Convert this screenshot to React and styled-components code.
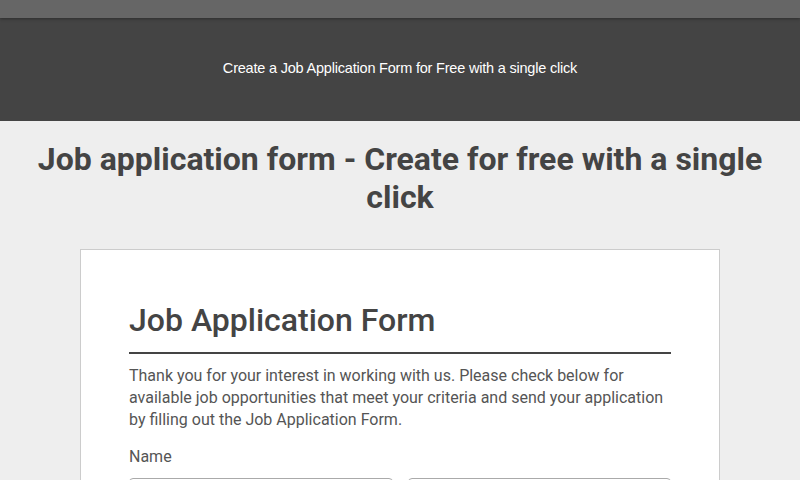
import React from "react";
import styled, { createGlobalStyle } from "styled-components";

const Global = createGlobalStyle`
  html, body { margin: 0; padding: 0; background: #eeeeee; }
  body { font-family: Roboto, "Liberation Sans", sans-serif; }
  * { box-sizing: border-box; }
`;

const TopBar = styled.div`
  height: 18px;
  background: #666666;
  box-shadow: 0 1px 3px rgba(0,0,0,0.35);
  position: relative;
  z-index: 1;
`;

const Banner = styled.header`
  height: 103px;
  background: #444444;
  display: flex;
  align-items: center;
  justify-content: center;
  padding-bottom: 4px;
`;

const BannerText = styled.span`
  font-family: "Liberation Sans", Arial, sans-serif;
  font-size: 14.5px;
  color: #ffffff;
  letter-spacing: -0.2px;
`;

const Main = styled.main`
  display: flex;
  flex-direction: column;
  align-items: center;
  padding: 19px 20px 0;
`;

const PageTitle = styled.h1`
  margin: 0 0 33px;
  font-size: 32px;
  line-height: 38px;
  font-weight: 700;
  color: #444444;
  text-align: center;
  max-width: 760px;
`;

const Card = styled.section`
  width: 640px;
  background: #ffffff;
  border: 1px solid #cccccc;
  padding: 50px 48px 40px;
`;

const FormTitle = styled.h2`
  margin: 0;
  font-size: 32px;
  line-height: 40px;
  font-weight: 500;
  color: #444444;
  padding-bottom: 12px;
  border-bottom: 2px solid #444444;
`;

const Intro = styled.p`
  margin: 11px 0 0;
  font-size: 16px;
  line-height: 22px;
  color: #555555;
`;

const Label = styled.div`
  margin-top: 15px;
  font-size: 16px;
  line-height: 22px;
  color: #555555;
`;

const Row = styled.div`
  display: grid;
  grid-template-columns: 1fr 1fr;
  gap: 15px;
  margin-top: 10px;
`;

const Input = styled.input`
  height: 38px;
  border: 1px solid #aaaaaa;
  border-radius: 4px;
  font-family: inherit;
  font-size: 16px;
  padding: 0 10px;
`;

export default function App() {
  return (
    <>
      <Global />
      <TopBar />
      <Banner>
        <BannerText>Create a Job Application Form for Free with a single click</BannerText>
      </Banner>
      <Main>
        <PageTitle>Job application form - Create for free with a single click</PageTitle>
        <Card>
          <FormTitle>Job Application Form</FormTitle>
          <Intro>
            Thank you for your interest in working with us. Please check below for
            available job opportunities that meet your criteria and send your application
            by filling out the Job Application Form.
          </Intro>
          <Label>Name</Label>
          <Row>
            <Input />
            <Input />
          </Row>
        </Card>
      </Main>
    </>
  );
}
